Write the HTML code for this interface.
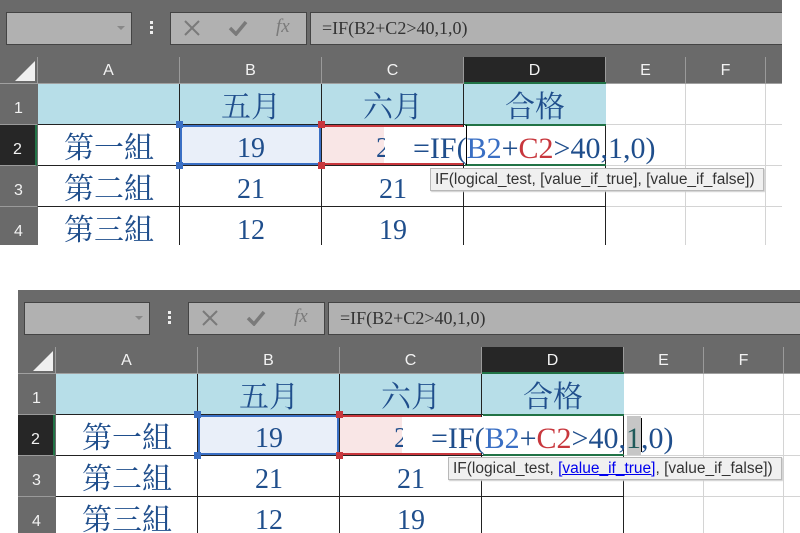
<!DOCTYPE html>
<html><head><meta charset="utf-8"><style>
*{margin:0;padding:0;box-sizing:border-box}
body{width:800px;height:533px;background:#fff;position:relative;overflow:hidden;font-family:"Liberation Sans",sans-serif}
.p{position:absolute;width:782px;background:#6a6a6a;overflow:hidden}
.p div{position:absolute}
.box{background:#b1b1b1;border:1px solid #444;top:12px;height:33px}
.hd{color:#f2f2f2;font-size:16px;text-align:center;top:57px;height:26px;line-height:28px;border-right:1px solid #9a9a9a}
.rh{left:0;width:37px;color:#f2f2f2;font-size:16px;text-align:center;border-bottom:1px solid #9a9a9a;padding-top:16px}
.c{font-family:"Liberation Serif","Noto Serif CJK SC",serif;color:#1f4e8c;font-size:28px;text-align:center;line-height:41px;height:41px;padding-top:3px}
.k{font-size:30px}
.v{width:1px;background:#222}
.h{height:1px;background:#222}
.gv{width:1px;background:#d4d4d4}
.gh{height:1px;background:#d4d4d4}
.tip{background:#f0f0f0;border:1px solid #b8b8b8;font-size:15.5px;color:#333;height:23px;line-height:21px;padding-left:4px;white-space:nowrap;box-shadow:1px 1px 1px #ccc}
.f{font-family:"Liberation Serif",serif;font-size:30px;color:#1f4e8c;line-height:41px;white-space:nowrap}
.hdl{width:7px;height:7px}
.x{font-family:"DejaVu Sans",sans-serif;font-size:22px;color:#7a7a7a;top:14px}
</style></head><body>

<!-- TOP PANEL -->
<div class="p" style="left:0;top:0;height:245px">
 <div class="box" style="left:6px;width:126px"></div>
 <div style="left:117px;top:26px;width:0;height:0;border-left:4px solid transparent;border-right:4px solid transparent;border-top:4px solid #888"></div>
 <div style="left:150px;top:21px;width:3px;height:3px;background:#eee;box-shadow:0 5px 0 #eee,0 10px 0 #eee"></div>
 <div class="box" style="left:170px;width:137px"></div>
 <svg style="position:absolute;left:184px;top:20px" width="16" height="16"><path d="M1 1L15 15M15 1L1 15" stroke="#7a7a7a" stroke-width="2"/></svg>
 <svg style="position:absolute;left:228px;top:20px" width="20" height="16"><path d="M2 8L8 14L18 2" stroke="#7a7a7a" stroke-width="3.5" fill="none"/></svg>
 <div style="left:276px;top:16px;font-family:'Liberation Serif',serif;font-style:italic;font-size:19px;color:#7a7a7a">fx</div>
 <div class="box" style="left:310px;width:480px;border-right:none"></div>
 <div style="left:322px;top:18px;font-family:'Liberation Serif',serif;font-size:18px;color:#333">=IF(B2+C2&gt;40,1,0)</div>
 <div style="left:15px;top:61px;width:0;height:0;border-left:20px solid transparent;border-bottom:20px solid #f0f0f0"></div>
 <div style="left:37px;top:57px;width:1px;height:26px;background:#9a9a9a"></div>
 <div class="hd" style="left:38px;width:142px">A</div>
 <div class="hd" style="left:180px;width:142px">B</div>
 <div class="hd" style="left:322px;width:142px">C</div>
 <div class="hd" style="left:464px;width:142px;background:#262626">D</div>
 <div class="hd" style="left:606px;width:80px">E</div>
 <div class="hd" style="left:686px;width:80px">F</div>
 <div style="left:0;top:83px;width:782px;height:1px;background:#a0a0a0"></div>
 <div style="left:464px;top:82px;width:142px;height:2px;background:#217346"></div>
 <div class="rh" style="top:84px;height:41px">1</div>
 <div class="rh" style="top:125px;height:41px;background:#262626;border-right:2px solid #217346">2</div>
 <div class="rh" style="top:166px;height:41px">3</div>
 <div class="rh" style="top:207px;height:41px">4</div>
 <div style="left:38px;top:84px;width:744px;height:161px;background:#fff"></div>
 <div style="left:38px;top:84px;width:568px;height:41px;background:#b7dee8"></div>
 <div class="gv" style="left:685px;top:84px;height:161px"></div>
 <div class="gv" style="left:765px;top:84px;height:161px"></div>
 <div class="gh" style="left:606px;top:124px;width:176px"></div>
 <div class="gh" style="left:606px;top:165px;width:176px"></div>
 <div class="gh" style="left:606px;top:206px;width:176px"></div>
 <div class="v" style="left:179px;top:84px;height:161px"></div>
 <div class="v" style="left:321px;top:84px;height:161px"></div>
 <div class="v" style="left:463px;top:84px;height:161px"></div>
 <div class="v" style="left:605px;top:124px;height:121px"></div>
 <div class="h" style="left:38px;top:124px;width:568px"></div>
 <div class="h" style="left:38px;top:165px;width:568px"></div>
 <div class="h" style="left:38px;top:206px;width:568px"></div>
 <div style="left:180px;top:125px;width:141px;height:40px;background:#e9eff9;border:2px solid #3a6fc4"></div>
 <div style="left:322px;top:125px;width:141px;height:40px;background:#f9e6e6;border:2px solid #c8373d;border-left:none"></div>
 <div style="left:384px;top:127px;width:80px;height:36px;background:#fff"></div>
 <div style="left:465px;top:124px;width:141px;height:2px;background:#217346"></div>
 <div style="left:465px;top:164px;width:141px;height:2px;background:#217346"></div>
 <div style="left:466px;top:125px;width:1px;height:40px;background:#000"></div>
 <div class="hdl" style="left:176px;top:121px;background:#3a6fc4"></div>
 <div class="hdl" style="left:176px;top:162px;background:#3a6fc4"></div>
 <div class="hdl" style="left:318px;top:121px;background:#c8373d"></div>
 <div class="hdl" style="left:318px;top:162px;background:#c8373d"></div>
 <div class="c k" style="left:180px;top:84px;width:142px">五月</div>
 <div class="c k" style="left:322px;top:84px;width:142px">六月</div>
 <div class="c k" style="left:464px;top:84px;width:142px">合格</div>
 <div class="c k" style="left:38px;top:125px;width:142px">第一組</div>
 <div class="c" style="left:180px;top:125px;width:142px">19</div>
 <div class="c" style="left:376px;top:125px;width:9px;overflow:hidden;text-align:left">2</div>
 <div class="c k" style="left:38px;top:166px;width:142px">第二組</div>
 <div class="c" style="left:180px;top:166px;width:142px">21</div>
 <div class="c" style="left:322px;top:166px;width:142px">21</div>
 <div class="c k" style="left:38px;top:207px;width:142px">第三組</div>
 <div class="c" style="left:180px;top:207px;width:142px">12</div>
 <div class="c" style="left:322px;top:207px;width:142px">19</div>
 <div class="f" style="left:413px;top:128px">=IF(<span style="color:#3a6fc4">B2</span>+<span style="color:#c8373d">C2</span>&gt;40,1,0)</div>
 <div class="tip" style="left:430px;top:168px;width:334px">IF(logical_test, [value_if_true], [value_if_false])</div>
</div>

<!-- BOTTOM PANEL -->
<div class="p" style="left:18px;top:290px;height:243px">
 <div class="box" style="left:6px;width:126px;top:12px"></div>
 <div style="left:117px;top:26px;width:0;height:0;border-left:4px solid transparent;border-right:4px solid transparent;border-top:4px solid #888"></div>
 <div style="left:150px;top:21px;width:3px;height:3px;background:#eee;box-shadow:0 5px 0 #eee,0 10px 0 #eee"></div>
 <div class="box" style="left:170px;width:137px"></div>
 <svg style="position:absolute;left:184px;top:20px" width="16" height="16"><path d="M1 1L15 15M15 1L1 15" stroke="#7a7a7a" stroke-width="2"/></svg>
 <svg style="position:absolute;left:228px;top:20px" width="20" height="16"><path d="M2 8L8 14L18 2" stroke="#7a7a7a" stroke-width="3.5" fill="none"/></svg>
 <div style="left:276px;top:16px;font-family:'Liberation Serif',serif;font-style:italic;font-size:19px;color:#7a7a7a">fx</div>
 <div class="box" style="left:310px;width:480px;border-right:none"></div>
 <div style="left:322px;top:18px;font-family:'Liberation Serif',serif;font-size:18px;color:#333">=IF(B2+C2&gt;40,1,0)</div>
 <div style="left:15px;top:61px;width:0;height:0;border-left:20px solid transparent;border-bottom:20px solid #f0f0f0"></div>
 <div style="left:37px;top:57px;width:1px;height:26px;background:#9a9a9a"></div>
 <div class="hd" style="left:38px;width:142px">A</div>
 <div class="hd" style="left:180px;width:142px">B</div>
 <div class="hd" style="left:322px;width:142px">C</div>
 <div class="hd" style="left:464px;width:142px;background:#262626">D</div>
 <div class="hd" style="left:606px;width:80px">E</div>
 <div class="hd" style="left:686px;width:80px">F</div>
 <div style="left:0;top:83px;width:782px;height:1px;background:#a0a0a0"></div>
 <div style="left:464px;top:82px;width:142px;height:2px;background:#217346"></div>
 <div class="rh" style="top:84px;height:41px">1</div>
 <div class="rh" style="top:125px;height:41px;background:#262626;border-right:2px solid #217346">2</div>
 <div class="rh" style="top:166px;height:41px">3</div>
 <div class="rh" style="top:207px;height:41px">4</div>
 <div style="left:38px;top:84px;width:744px;height:161px;background:#fff"></div>
 <div style="left:38px;top:84px;width:568px;height:41px;background:#b7dee8"></div>
 <div class="gv" style="left:685px;top:84px;height:161px"></div>
 <div class="gv" style="left:765px;top:84px;height:161px"></div>
 <div class="gh" style="left:606px;top:124px;width:176px"></div>
 <div class="gh" style="left:606px;top:165px;width:176px"></div>
 <div class="gh" style="left:606px;top:206px;width:176px"></div>
 <div class="v" style="left:179px;top:84px;height:161px"></div>
 <div class="v" style="left:321px;top:84px;height:161px"></div>
 <div class="v" style="left:463px;top:84px;height:161px"></div>
 <div class="v" style="left:605px;top:124px;height:121px"></div>
 <div class="h" style="left:38px;top:124px;width:568px"></div>
 <div class="h" style="left:38px;top:165px;width:568px"></div>
 <div class="h" style="left:38px;top:206px;width:568px"></div>
 <div style="left:180px;top:125px;width:141px;height:40px;background:#e9eff9;border:2px solid #3a6fc4"></div>
 <div style="left:322px;top:125px;width:141px;height:40px;background:#f9e6e6;border:2px solid #c8373d;border-left:none"></div>
 <div style="left:384px;top:127px;width:80px;height:36px;background:#fff"></div>
 <div style="left:465px;top:124px;width:141px;height:2px;background:#217346"></div>
 <div style="left:465px;top:164px;width:141px;height:2px;background:#217346"></div>
 <div class="hdl" style="left:176px;top:121px;background:#3a6fc4"></div>
 <div class="hdl" style="left:176px;top:162px;background:#3a6fc4"></div>
 <div class="hdl" style="left:318px;top:121px;background:#c8373d"></div>
 <div class="hdl" style="left:318px;top:162px;background:#c8373d"></div>
 <div class="c k" style="left:180px;top:84px;width:142px">五月</div>
 <div class="c k" style="left:322px;top:84px;width:142px">六月</div>
 <div class="c k" style="left:464px;top:84px;width:142px">合格</div>
 <div class="c k" style="left:38px;top:125px;width:142px">第一組</div>
 <div class="c" style="left:180px;top:125px;width:142px">19</div>
 <div class="c" style="left:376px;top:125px;width:9px;overflow:hidden;text-align:left">2</div>
 <div class="c k" style="left:38px;top:166px;width:142px">第二組</div>
 <div class="c" style="left:180px;top:166px;width:142px">21</div>
 <div class="c" style="left:322px;top:166px;width:142px">21</div>
 <div class="c k" style="left:38px;top:207px;width:142px">第三組</div>
 <div class="c" style="left:180px;top:207px;width:142px">12</div>
 <div class="c" style="left:322px;top:207px;width:142px">19</div>
 <div style="left:609px;top:126px;width:14px;height:39px;background:#c6c6c6"></div>
 <div style="left:623px;top:128px;width:1px;height:34px;background:#000"></div>
 <div class="f" style="left:413px;top:128px">=IF(<span style="color:#3a6fc4">B2</span>+<span style="color:#c8373d">C2</span>&gt;40,<span style="color:#1f5a5a">1</span>,0)</div>
 <div class="tip" style="left:430px;top:167px;width:334px">IF(logical_test, <span style="color:#0000ee;text-decoration:underline">[value_if_true]</span>, [value_if_false])</div>
</div>
</body></html>
